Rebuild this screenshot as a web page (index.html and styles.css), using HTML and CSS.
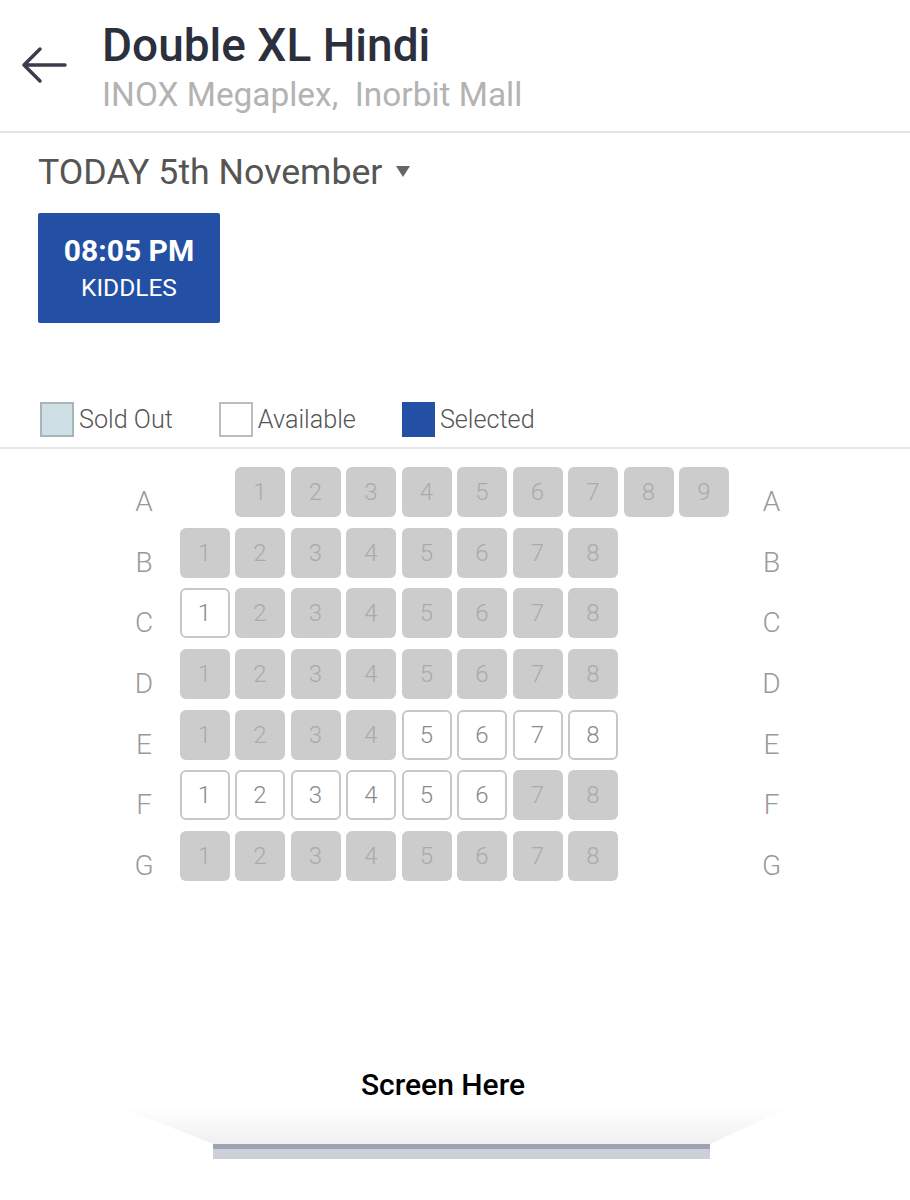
FILE: index.html
```html
<!DOCTYPE html>
<html>
<head>
<meta charset="utf-8">
<link rel="stylesheet" href="styles.css">
</head>
<body>
<header class="header">
  <div class="back">
    <svg width="46" height="38" viewBox="0 0 46 38"><path d="M44 19 H3 M19 3 L3 19 L19 35" fill="none" stroke="#3b3e4a" stroke-width="3.5" stroke-linecap="round" stroke-linejoin="round"/></svg>
  </div>
  <div class="titles">
    <div class="title">Double XL Hindi</div>
    <div class="subtitle">INOX Megaplex,&nbsp; Inorbit Mall</div>
  </div>
</header>

<div class="date-row">
  <span class="date">TODAY 5th November</span>
  <span class="caret"></span>
</div>

<div class="show">
  <div class="show-time">08:05 PM</div>
  <div class="show-name">KIDDLES</div>
</div>

<div class="legend">
  <div class="legend-item"><span class="lbox sold"></span><span class="ltext">Sold Out</span></div>
  <div class="legend-item"><span class="lbox avail"></span><span class="ltext">Available</span></div>
  <div class="legend-item"><span class="lbox sel"></span><span class="ltext">Selected</span></div>
</div>

<div class="seatmap" id="seatmap"></div>

<div class="screen">
  <div class="screen-text">Screen Here</div>
  <div class="screen-glow"></div>
  <div class="screen-bar"></div>
</div>

<script src="app.js"></script>
</body>
</html>
```

FILE: styles.css
```css
* { box-sizing: border-box; }
body {
  margin: 0;
  background: #fff;
  font-family: Roboto, "Liberation Sans", sans-serif;
  width: 910px;
}
.header {
  display: flex;
  height: 133px;
  border-bottom: 2px solid #e4e4e4;
}
.back {
  padding: 46px 0 0 21px;
  width: 102px;
}
.back svg { display: block; }
.titles { padding-top: 18px; }
.title {
  font-size: 46px;
  line-height: 54px;
  font-weight: 500;
  color: #2c2f3c;
}
.subtitle {
  margin-top: 4px;
  font-size: 33.4px;
  line-height: 38px;
  color: #b3b3b3;
}
.date-row {
  display: flex;
  align-items: center;
  margin: 17px 0 0 38px;
  height: 44px;
}
.date {
  font-size: 35.7px;
  line-height: 44px;
  color: #555;
}
.caret {
  margin-left: 14px;
  width: 0;
  height: 0;
  border-left: 7px solid transparent;
  border-right: 7px solid transparent;
  border-top: 11px solid #666;
  margin-top: -2px;
}
.show {
  margin: 19px 0 0 38px;
  width: 182px;
  height: 110px;
  background: #2350a4;
  border-radius: 2px;
  color: #fff;
  display: flex;
  flex-direction: column;
  align-items: center;
  justify-content: center;
}
.show-time {
  font-size: 30px;
  line-height: 34px;
  font-weight: 700;
  margin-top: 0;
}
.show-name {
  font-size: 24.5px;
  line-height: 30px;
  margin-top: 5px;
}
.legend {
  margin-top: 79px;
  display: flex;
  align-items: center;
  padding: 0 0 10px 40px;
  border-bottom: 2px solid #e6e6e6;
}
.legend-item {
  display: flex;
  align-items: center;
}
.legend-item + .legend-item { margin-left: 46px; }
.lbox {
  width: 34px;
  height: 35px;
  display: block;
}
.lbox.sold { background: #cfdfe6; border: 2px solid #a7b4ba; }
.lbox.avail { background: #fff; border: 2px solid #bdbdbd; }
.lbox.sel { background: #2350a5; width: 33px; }
.ltext {
  margin-left: 5px;
  font-size: 25.2px;
  font-weight: 300;
  color: #555;
  line-height: 30px;
}
.seatmap {
  margin-top: 18px;
  margin-left: 114px;
  display: grid;
  grid-template-columns: 60px repeat(10, 50px) 74px;
  grid-auto-rows: 50px;
  column-gap: 5.5px;
  row-gap: 10.7px;
}
.rlabel {
  font-size: 28px;
  font-weight: 300;
  color: #999;
  text-align: center;
  line-height: 30px;
  padding-top: 20px;
}
.rlabel.right { grid-column: 12; }
.rlabel.left { grid-column: 1; }
.seat {
  border-radius: 6px;
  background: #cccccc;
  color: #aaa;
  font-size: 24px;
  font-weight: 300;
  display: flex;
  align-items: center;
  justify-content: center;
}
.seat.avail {
  background: #fff;
  border: 2px solid #c8c8c8;
  color: #8a8a8a;
}
.screen {
  margin-top: 186px;
  height: 120px;
}
.screen-text {
  text-align: center;
  font-size: 30px;
  line-height: 36px;
  font-weight: 500;
  color: #000;
  padding-right: 24px;
}
.screen-glow {
  margin: 4px 0 0 120px;
  width: 670px;
  height: 37px;
  background: linear-gradient(#ffffff, #f0f0f2);
  clip-path: polygon(0 0, 100% 0, 88% 100%, 14% 100%);
}
.screen-bar {
  margin-left: 213px;
  width: 497px;
  height: 15px;
  background: #cdd0d8;
  border-top: 5px solid #9ea3b1;
}
```

FILE: app.js
```js
(function () {
  var map = document.getElementById('seatmap');
  // rows: [label, startColumn, count, availableSeats]
  var rows = [
    ['A', 2, 9, []],
    ['B', 1, 8, []],
    ['C', 1, 8, [1]],
    ['D', 1, 8, []],
    ['E', 1, 8, [5, 6, 7, 8]],
    ['F', 1, 8, [1, 2, 3, 4, 5, 6]],
    ['G', 1, 8, []]
  ];
  rows.forEach(function (r, i) {
    var gr = i + 1;
    var l = document.createElement('div');
    l.className = 'rlabel left';
    l.style.gridRow = gr;
    l.textContent = r[0];
    map.appendChild(l);
    for (var n = 1; n <= r[2]; n++) {
      var s = document.createElement('div');
      s.className = 'seat' + (r[3].indexOf(n) >= 0 ? ' avail' : '');
      s.style.gridRow = gr;
      s.style.gridColumn = (r[1] + n);
      s.textContent = n;
      map.appendChild(s);
    }
    var rr = document.createElement('div');
    rr.className = 'rlabel right';
    rr.style.gridRow = gr;
    rr.textContent = r[0];
    map.appendChild(rr);
  });
})();
```
